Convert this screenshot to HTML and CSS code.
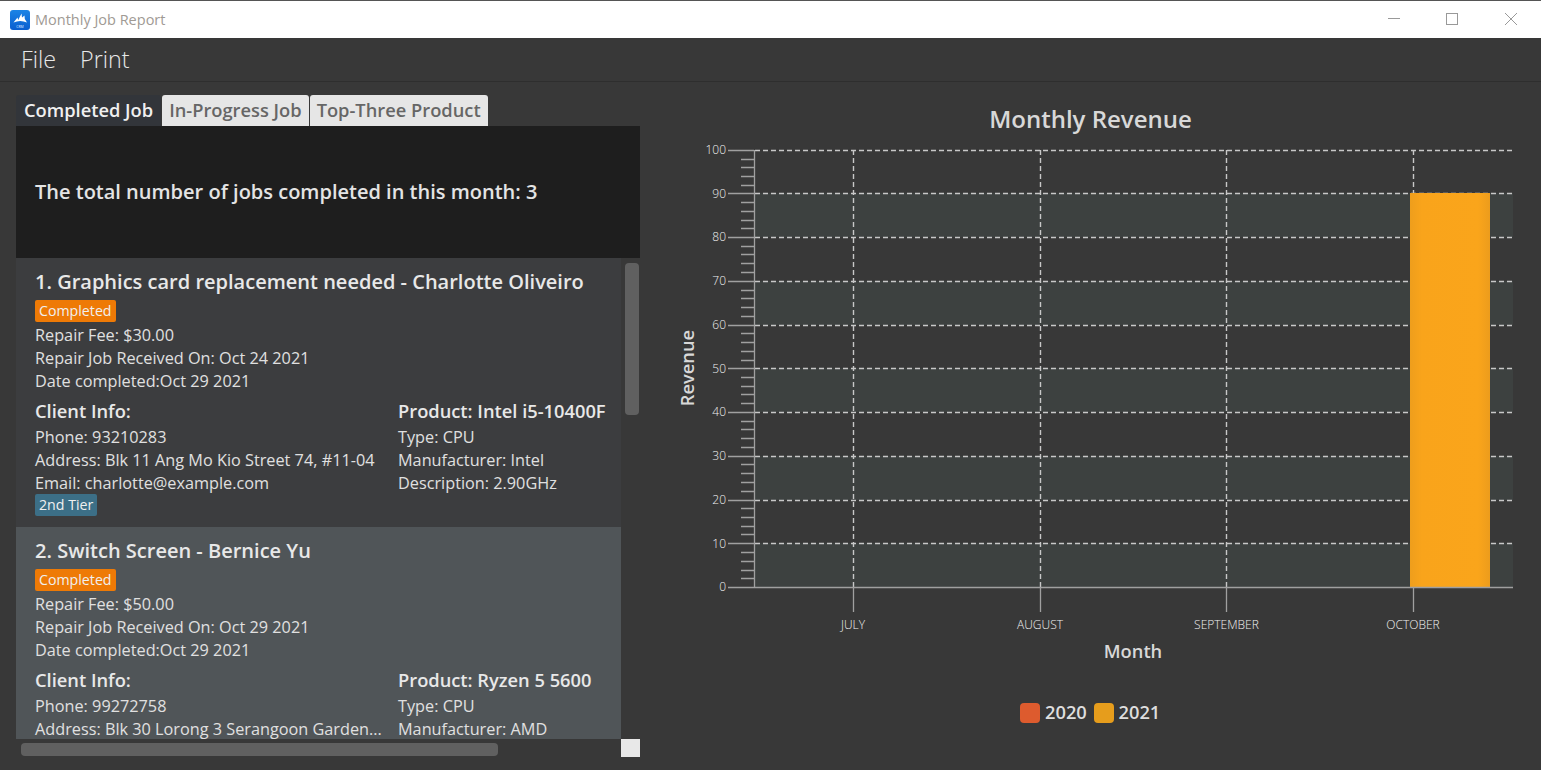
FILE: index.html
```html
<!DOCTYPE html>
<html lang="en">
<head>
<meta charset="utf-8">
<title>Monthly Job Report</title>
<link rel="stylesheet" href="styles.css">
</head>
<body>
<header class="titlebar">
  <svg class="app-icon" viewBox="0 0 20 20" width="20" height="20" aria-hidden="true">
    <defs><linearGradient id="icofill" x1="0" x2="0" y1="0" y2="1"><stop offset="0" stop-color="#1b84e6"/><stop offset="1" stop-color="#0a5ecf"/></linearGradient></defs>
    <rect width="20" height="20" rx="3" fill="url(#icofill)"/>
    <path d="M3.5 12.5 L7.5 7.5 L8.2 10 L11.5 3.5 L12 7.5 L14.5 5.5 L14.8 9 L17 12.5 C12.5 10.5 8 10.5 3.5 12.5Z" fill="#fff"/>
    <text class="icon-text" x="10" y="17.5" text-anchor="middle">CRM</text>
  </svg>
  <span class="window-title">Monthly Job Report</span>
  <div class="window-controls">
    <svg width="14" height="14" viewBox="0 0 14 14" aria-hidden="true"><path d="M1 6.5H13" stroke="#999" fill="none"/></svg>
    <svg width="14" height="14" viewBox="0 0 14 14" aria-hidden="true"><rect x="1.5" y="1.5" width="11" height="11" stroke="#999" fill="none"/></svg>
    <svg class="wc-close" width="14" height="14" viewBox="0 0 14 14" aria-hidden="true"><path d="M1 1L13 13M13 1L1 13" stroke="#999" fill="none"/></svg>
  </div>
</header>
<nav class="menubar">
  <span class="menu-item">File</span>
  <span class="menu-item">Print</span>
</nav>
<main class="content">
  <section class="left">
    <div class="tabs">
      <div class="tab tab-active">Completed Job</div>
      <div class="tab">In-Progress Job</div>
      <div class="tab">Top-Three Product</div>
    </div>
    <div class="stat">The total number of jobs completed in this month: 3</div>
    <div class="listbox">
      <div class="viewport">
        <article class="card">
          <h2 class="card-title">1. Graphics card replacement needed - Charlotte Oliveiro</h2>
          <span class="badge badge-status">Completed</span>
          <p class="line">Repair Fee: $30.00</p>
          <p class="line">Repair Job Received On: Oct 24 2021</p>
          <p class="line">Date completed:Oct 29 2021</p>
          <div class="details">
            <div class="col-client">
              <h3 class="sub">Client Info:</h3>
              <p class="line">Phone: 93210283</p>
              <p class="line">Address: Blk 11 Ang Mo Kio Street 74, #11-04</p>
              <p class="line">Email: charlotte@example.com</p>
              <span class="badge badge-tier">2nd Tier</span>
            </div>
            <div class="col-product">
              <h3 class="sub">Product: Intel i5-10400F</h3>
              <p class="line">Type: CPU</p>
              <p class="line">Manufacturer: Intel</p>
              <p class="line">Description: 2.90GHz</p>
            </div>
          </div>
        </article>
        <article class="card card-alt">
          <h2 class="card-title">2. Switch Screen - Bernice Yu</h2>
          <span class="badge badge-status">Completed</span>
          <p class="line">Repair Fee: $50.00</p>
          <p class="line">Repair Job Received On: Oct 29 2021</p>
          <p class="line">Date completed:Oct 29 2021</p>
          <div class="details">
            <div class="col-client">
              <h3 class="sub">Client Info:</h3>
              <p class="line">Phone: 99272758</p>
              <p class="line">Address: Blk 30 Lorong 3 Serangoon Garden...</p>
            </div>
            <div class="col-product">
              <h3 class="sub">Product: Ryzen 5 5600</h3>
              <p class="line">Type: CPU</p>
              <p class="line">Manufacturer: AMD</p>
            </div>
          </div>
        </article>
      </div>
      <div class="vtrack"><div class="vthumb"></div></div>
      <div class="htrack"><div class="hthumb"></div></div>
      <div class="corner"></div>
    </div>
  </section>
  <section class="chart">
    <svg class="chart-svg" viewBox="640 82 901 688" width="901" height="688" role="img" aria-label="Monthly Revenue chart">
      <defs>
        <linearGradient id="barfill" x1="0" x2="1" y1="0" y2="0">
          <stop offset="0" stop-color="#ee9e1c"/>
          <stop offset=".15" stop-color="#f9a41b"/>
          <stop offset=".85" stop-color="#faa51b"/>
          <stop offset="1" stop-color="#ec9c1c"/>
        </linearGradient>
      </defs>
      <text class="chart-title" x="1090.5" y="128" text-anchor="middle">Monthly Revenue</text>
      <g class="bands">
        <rect x="755" y="193" width="758" height="44"/>
        <rect x="755" y="281" width="758" height="44"/>
        <rect x="755" y="368" width="758" height="44"/>
        <rect x="755" y="456" width="758" height="44"/>
        <rect x="755" y="543" width="758" height="44"/>
      </g>
      <path class="grid" d="M755 150.5H1513M755 193.5H1513M755 237.5H1513M755 281.5H1513M755 325.5H1513M755 368.5H1513M755 412.5H1513M755 456.5H1513M755 500.5H1513M755 543.5H1513"/>
      <path class="grid" d="M853.5 150V587M1040.5 150V587M1226.5 150V587M1413.5 150V587"/>
      <rect x="1410" y="193" width="80" height="394" fill="url(#barfill)"/>
      <path class="axis" d="M754.5 150V587M728 150.5H754M728 193.5H754M728 237.5H754M728 281.5H754M728 325.5H754M728 368.5H754M728 412.5H754M728 456.5H754M728 500.5H754M728 543.5H754M728 587.5H1513M853.5 587V612M1040.5 587V612M1226.5 587V612M1413.5 587V612"/>
      <path class="axis" d="M741 159.5H754M741 167.5H754M741 176.5H754M741 185.5H754M741 202.5H754M741 211.5H754M741 220.5H754M741 228.5H754M741 246.5H754M741 254.5H754M741 263.5H754M741 272.5H754M741 290.5H754M741 298.5H754M741 307.5H754M741 316.5H754M741 333.5H754M741 342.5H754M741 351.5H754M741 360.5H754M741 377.5H754M741 386.5H754M741 394.5H754M741 403.5H754M741 421.5H754M741 429.5H754M741 438.5H754M741 447.5H754M741 464.5H754M741 473.5H754M741 482.5H754M741 491.5H754M741 508.5H754M741 517.5H754M741 526.5H754M741 534.5H754M741 552.5H754M741 561.5H754M741 570.5H754M741 578.5H754"/>
      <g class="tick-y" text-anchor="end">
        <text x="726" y="154">100</text>
        <text x="726" y="198">90</text>
        <text x="726" y="241">80</text>
        <text x="726" y="285">70</text>
        <text x="726" y="329">60</text>
        <text x="726" y="373">50</text>
        <text x="726" y="416">40</text>
        <text x="726" y="460">30</text>
        <text x="726" y="504">20</text>
        <text x="726" y="548">10</text>
        <text x="726" y="591">0</text>
      </g>
      <g class="tick-x" text-anchor="middle">
        <text x="853" y="629">JULY</text>
        <text x="1040" y="629">AUGUST</text>
        <text x="1226.5" y="629">SEPTEMBER</text>
        <text x="1413" y="629">OCTOBER</text>
      </g>
      <text class="axis-label" x="1133" y="658" text-anchor="middle">Month</text>
      <text class="axis-label" transform="translate(694 368) rotate(-90)" text-anchor="middle">Revenue</text>
      <rect x="1020" y="703" width="20" height="20" rx="4" fill="#dd5b2e"/>
      <text class="legend" x="1045" y="718.5">2020</text>
      <rect x="1094" y="703" width="20" height="20" rx="4" fill="#e69d1c"/>
      <text class="legend" x="1118.5" y="718.5">2021</text>
    </svg>
  </section>
</main>
</body>
</html>
```

FILE: styles.css
```css
* { box-sizing: border-box; }
html, body { margin: 0; height: 100%; }
body {
  width: 1541px;
  height: 770px;
  overflow: hidden;
  background: #383838;
  font-family: "Open Sans", sans-serif;
  color: #e4e4e4;
  display: flex;
  flex-direction: column;
}
.titlebar {
  height: 38px;
  flex: none;
  background: #fff;
  border-top: 1px solid #555;
  display: flex;
  align-items: center;
  padding-left: 10px;
}
.app-icon { flex: none; }
.icon-text { font-size: 3.4px; font-weight: 600; fill: #bcdcff; }
.window-title {
  margin-left: 5px;
  font-size: 14.5px;
  color: #a09a94;
}
.window-controls {
  margin-left: auto;
  margin-right: 23px;
  margin-bottom: 1px;
  display: flex;
  gap: 44px;
}
.wc-close { margin-left: 1px; }
.menubar {
  height: 44px;
  flex: none;
  display: flex;
  align-items: center;
  gap: 24px;
  padding: 0 0 2px 21px;
  border-bottom: 1px solid #2e2e2e;
}
.menu-item { font-size: 23.3px; font-weight: 300; color: #e8e8e8; }
.content { flex: 1; display: flex; min-height: 0; }
.left { width: 640px; flex: none; padding: 13px 0 0 16px; }
.tabs { display: flex; gap: 1px; height: 31px; }
.tab {
  padding: 0 7px;
  background: #e6e6e6;
  color: #666;
  font-size: 18.3px;
  font-weight: 600;
  line-height: 30px;
  border-radius: 3px 3px 0 0;
  white-space: nowrap;
}
.tab-active { background: #32353a; color: #f0f0f0; padding: 0 8px; }
.stat {
  height: 132px;
  background: #1e1e1e;
  padding: 0 19px 2px;
  display: flex;
  align-items: center;
  font-size: 20px;
  font-weight: 600;
  color: #e4e4e4;
}
.listbox {
  display: grid;
  grid-template-columns: 605px 19px;
  grid-template-rows: 481px 18px;
}
.viewport { overflow: hidden; }
.card {
  height: 269px;
  padding: 11px 0 0 19px;
  background: #3c3d3f;
}
.card-alt { background: #505558; }
.card-title {
  margin: 0 0 5px;
  font-size: 20.03px;
  line-height: 26px;
  font-weight: 600;
  color: #e8e8e8;
  white-space: nowrap;
}
.badge {
  display: block;
  width: max-content;
  height: 22px;
  padding: 0 4px;
  border-radius: 2px;
  font-size: 14.2px;
  line-height: 21px;
  color: #f0f0f0;
}
.badge-status { background: #ee7a06; margin-bottom: 2px; }
.badge-tier { background: #3c6f87; margin-top: -1px; }
.line {
  margin: 0;
  font-size: 16.25px;
  line-height: 23px;
  color: #e0e0e0;
  white-space: nowrap;
}
.details { display: flex; margin-top: 5px; }
.col-client { width: 363px; flex: none; }
.sub {
  margin: 0 0 2px;
  font-size: 18.3px;
  line-height: 26px;
  font-weight: 600;
  color: #e8e8e8;
}
.vtrack { background: #383838; padding: 5px 1px 0 4px; }
.vthumb { height: 152px; background: #606060; border-radius: 4px; }
.htrack { background: #383838; padding: 4px 0 1px 5px; }
.hthumb { width: 477px; height: 13px; background: #606060; border-radius: 4px; }
.corner { background: #e8e8e8; }
.chart { flex: 1; min-width: 0; }
.chart-svg { display: block; }
.chart-title { font-size: 24px; font-weight: 600; fill: #d8d8d8; }
.bands rect { fill: #3d4140; }
.grid { fill: none; stroke: #c8c8c8; stroke-width: 1.4; stroke-dasharray: 5 3; }
.axis { fill: none; stroke: #a0a0a0; stroke-width: 1.3; }
.tick-y text, .tick-x text { font-size: 12px; font-weight: 300; fill: #f0f0f0; }
.axis-label { font-size: 18.3px; font-weight: 600; fill: #d8d8d8; }
.legend { font-size: 18.3px; font-weight: 600; fill: #dedede; }
```
